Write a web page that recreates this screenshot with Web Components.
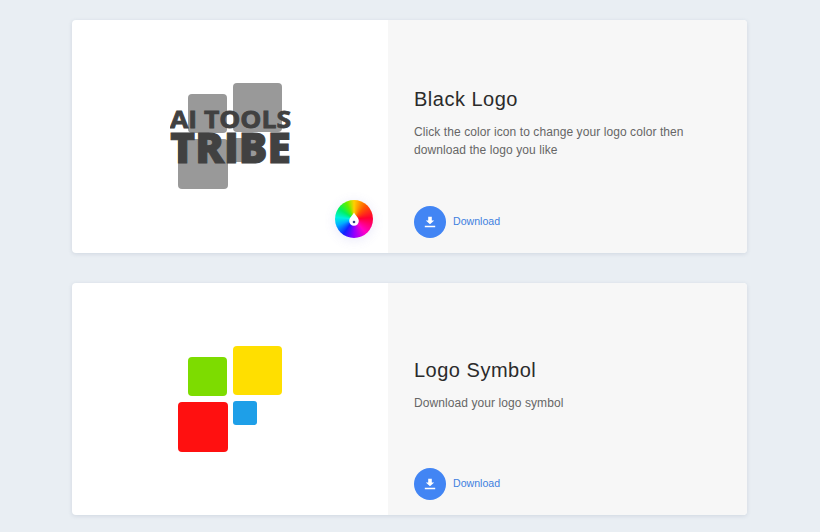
<!DOCTYPE html>
<html lang="en">
<head>
<meta charset="utf-8">
<title>Logo downloads</title>
<style>
  html, body { margin: 0; height: 100%; }
  body {
    background: #e9eef3;
    font-family: "Liberation Sans", Arial, sans-serif;
    overflow: hidden;
  }
  main {
    display: flex;
    flex-direction: column;
    gap: 30px;
    width: 675px;
    margin-left: 72px;
    padding-top: 20px;
  }
</style>
</head>
<body>
<main>
  <logo-card>
    <brand-logo mono slot="art"></brand-logo>
    <color-wheel slot="art"></color-wheel>
    <span slot="title">Black Logo</span>
    Click the color icon to change your logo color then download the logo you like
  </logo-card>
  <logo-card>
    <brand-logo slot="art" symbol></brand-logo>
    <span slot="title">Logo Symbol</span>
    Download your logo symbol
  </logo-card>
</main>

<script>
const logoCardTemplate = document.createElement("template");
logoCardTemplate.innerHTML = `
  <style>
    :host {
      display: grid;
      grid-template-columns: 316px 1fr;
      height: 232.5px;
      background: #fff;
      border-radius: 4px;
      box-shadow: 0 1px 4px rgba(60, 80, 110, 0.14);
      overflow: hidden;
    }
    .art {
      position: relative;
      display: flex;
      align-items: center;
      justify-content: center;
    }
    .info {
      display: flex;
      flex-direction: column;
      padding: 0 26px 15px;
      background: #f7f7f7;
    }
    .text {
      flex: 1;
      display: flex;
      flex-direction: column;
      justify-content: center;
      padding-top: 19px;
    }
    h2 {
      margin: 0 0 11px;
      font-size: 20px;
      line-height: 26px;
      font-weight: 400;
      color: #2b2b2b;
      letter-spacing: 0.5px;
    }
    p {
      margin: 0;
      max-width: 285px;
      font-size: 12px;
      line-height: 18px;
      letter-spacing: 0.08px;
      color: #666;
    }
  </style>
  <div class="art"><slot name="art"></slot></div>
  <div class="info">
    <div class="text">
      <h2><slot name="title"></slot></h2>
      <p><slot></slot></p>
    </div>
    <download-button></download-button>
  </div>
`;

class LogoCard extends HTMLElement {
  constructor() {
    super();
    this.attachShadow({ mode: "open" });
    this.shadowRoot.appendChild(logoCardTemplate.content.cloneNode(true));
  }
}

class BrandLogo extends HTMLElement {
  constructor() {
    super();
    this.attachShadow({ mode: "open" });
    const mono = this.hasAttribute("mono");
    const fills = mono
      ? ["#999", "#999", "#999", "#999"]
      : ["#ffdf00", "#7ddc00", "#ff1010", "#1e9fe8"];
    const words = mono
      ? `<text x="0" y="44.5" textLength="121" lengthAdjust="spacingAndGlyphs" font-size="24" font-weight="700" stroke="#414141" stroke-width="0.8">AI TOOLS</text>
         <text x="0" y="80" textLength="121" lengthAdjust="spacingAndGlyphs" font-size="43" font-weight="800" stroke="#414141" stroke-width="1">TRIBE</text>`
      : "";
    this.shadowRoot.innerHTML = `
      <style>
        :host { display: block; width: 121px; height: 106px; }
        svg { display: block; }
        text { font-family: "Open Sans", "Noto Sans", sans-serif; fill: #414141; }
      </style>
      <svg width="121" height="106" viewBox="0 0 121 106">
        <rect x="63" y="0" width="49" height="49" rx="4" fill="${fills[0]}"/>
        <rect x="18" y="11" width="39" height="39" rx="4" fill="${fills[1]}"/>
        <rect x="8" y="56" width="50" height="50" rx="4" fill="${fills[2]}"/>
        <rect x="63" y="55" width="24" height="24" rx="3" fill="${fills[3]}"/>
        ${words}
      </svg>
    `;
  }
}

class ColorWheel extends HTMLElement {
  constructor() {
    super();
    this.attachShadow({ mode: "open" });
    this.shadowRoot.innerHTML = `
      <style>
        :host {
          position: absolute;
          right: 15px;
          bottom: 15px;
          width: 38px;
          height: 38px;
          border-radius: 50%;
          box-shadow: 0 2px 12px rgba(110, 110, 220, 0.16);
          background: conic-gradient(from 0deg, #ffd000, #ff5a00 40deg, #ff0030 85deg, #ff00c8 140deg, #9000ff 180deg, #1020ff 215deg, #00b0ff 250deg, #00f0e0 275deg, #00f060 305deg, #60f000 335deg, #ffd000);
          display: flex;
          align-items: center;
          justify-content: center;
        }
        svg { display: block; }
      </style>
      <svg width="12" height="14" viewBox="0 0 12 14">
        <path d="M6 0.5C7.2 3 10.8 5.6 10.8 9A4.8 4.8 0 0 1 1.200 9C1.200 5.600 4.800 3 6 0.500Z" fill="#fff"/>
        <circle cx="6" cy="10" r="1.300" fill="#33408a"/>
      </svg>
    `;
  }
}

const downloadTemplate = document.createElement("template");
downloadTemplate.innerHTML = `
  <style>
    :host {
      display: flex;
      align-items: center;
      gap: 7px;
      font-size: 10.6px;
      color: #3f7fe0;
    }
    .circle {
      width: 32px;
      height: 32px;
      border-radius: 50%;
      background: #4285f4;
      display: flex;
      align-items: center;
      justify-content: center;
    }
    .label { margin-bottom: 2px; }
    svg { display: block; }
  </style>
  <span class="circle">
    <svg width="12" height="12" viewBox="0 0 12 12">
      <path d="M4.200 0.800H7.800V4.500H10.200L6 8.300 1.800 4.500H4.200Z M0.800 9.800H11.200V11.300H0.800Z" fill="#fff"/>
    </svg>
  </span>
  <span class="label">Download</span>
`;

class DownloadButton extends HTMLElement {
  constructor() {
    super();
    this.attachShadow({ mode: "open" });
    this.shadowRoot.appendChild(downloadTemplate.content.cloneNode(true));
  }
}

customElements.define("logo-card", LogoCard);
customElements.define("brand-logo", BrandLogo);
customElements.define("color-wheel", ColorWheel);
customElements.define("download-button", DownloadButton);
</script>
</body>
</html>
